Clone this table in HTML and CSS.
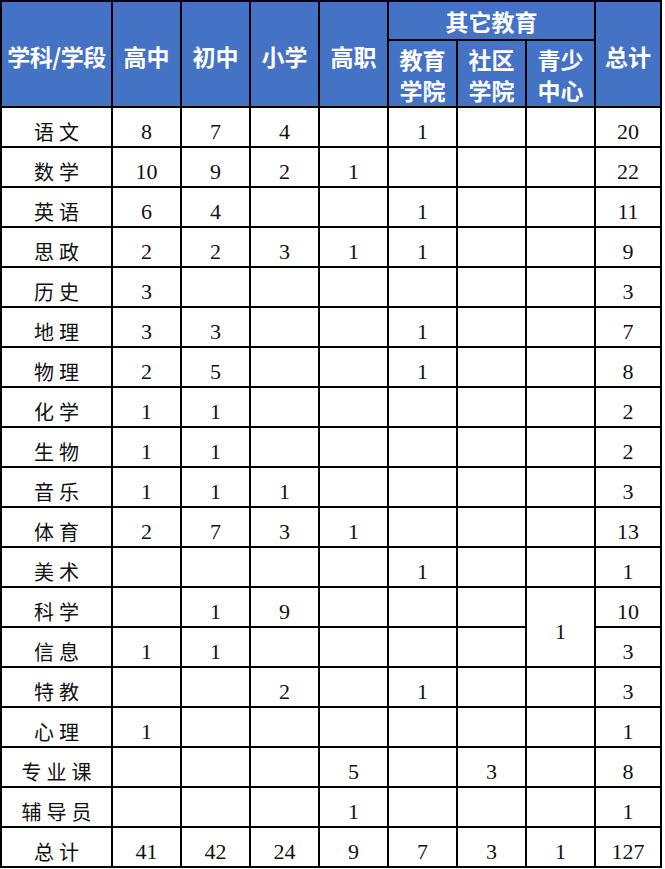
FILE: index.html
```html
<!DOCTYPE html>
<html lang="zh-CN">
<head>
<meta charset="utf-8">
<title>学科/学段统计</title>
<link rel="stylesheet" href="styles.css">
</head>
<body>
<div class="sheet">
  <div class="h tall first">学科/学段</div>
  <div class="h tall">高中</div>
  <div class="h tall">初中</div>
  <div class="h tall">小学</div>
  <div class="h tall">高职</div>
  <div class="h group">其它教育</div>
  <div class="h tall">总计</div>
  <div class="h sub">教育<br>学院</div>
  <div class="h sub">社区<br>学院</div>
  <div class="h sub">青少<br>中心</div>

  <div class="n">语文</div><div class="c">8</div><div class="c">7</div><div class="c">4</div><div class="c"></div><div class="c">1</div><div class="c"></div><div class="c"></div><div class="c">20</div>
  <div class="n">数学</div><div class="c">10</div><div class="c">9</div><div class="c">2</div><div class="c">1</div><div class="c"></div><div class="c"></div><div class="c"></div><div class="c">22</div>
  <div class="n">英语</div><div class="c">6</div><div class="c">4</div><div class="c"></div><div class="c"></div><div class="c">1</div><div class="c"></div><div class="c"></div><div class="c">11</div>
  <div class="n">思政</div><div class="c">2</div><div class="c">2</div><div class="c">3</div><div class="c">1</div><div class="c">1</div><div class="c"></div><div class="c"></div><div class="c">9</div>
  <div class="n">历史</div><div class="c">3</div><div class="c"></div><div class="c"></div><div class="c"></div><div class="c"></div><div class="c"></div><div class="c"></div><div class="c">3</div>
  <div class="n">地理</div><div class="c">3</div><div class="c">3</div><div class="c"></div><div class="c"></div><div class="c">1</div><div class="c"></div><div class="c"></div><div class="c">7</div>
  <div class="n">物理</div><div class="c">2</div><div class="c">5</div><div class="c"></div><div class="c"></div><div class="c">1</div><div class="c"></div><div class="c"></div><div class="c">8</div>
  <div class="n">化学</div><div class="c">1</div><div class="c">1</div><div class="c"></div><div class="c"></div><div class="c"></div><div class="c"></div><div class="c"></div><div class="c">2</div>
  <div class="n">生物</div><div class="c">1</div><div class="c">1</div><div class="c"></div><div class="c"></div><div class="c"></div><div class="c"></div><div class="c"></div><div class="c">2</div>
  <div class="n">音乐</div><div class="c">1</div><div class="c">1</div><div class="c">1</div><div class="c"></div><div class="c"></div><div class="c"></div><div class="c"></div><div class="c">3</div>
  <div class="n">体育</div><div class="c">2</div><div class="c">7</div><div class="c">3</div><div class="c">1</div><div class="c"></div><div class="c"></div><div class="c"></div><div class="c">13</div>
  <div class="n">美术</div><div class="c"></div><div class="c"></div><div class="c"></div><div class="c"></div><div class="c">1</div><div class="c"></div><div class="c"></div><div class="c">1</div>
  <div class="n">科学</div><div class="c"></div><div class="c">1</div><div class="c">9</div><div class="c"></div><div class="c"></div><div class="c"></div><div class="c span2">1</div><div class="c">10</div>
  <div class="n">信息</div><div class="c">1</div><div class="c">1</div><div class="c"></div><div class="c"></div><div class="c"></div><div class="c"></div><div class="c">3</div>
  <div class="n">特教</div><div class="c"></div><div class="c"></div><div class="c">2</div><div class="c"></div><div class="c">1</div><div class="c"></div><div class="c"></div><div class="c">3</div>
  <div class="n">心理</div><div class="c">1</div><div class="c"></div><div class="c"></div><div class="c"></div><div class="c"></div><div class="c"></div><div class="c"></div><div class="c">1</div>
  <div class="n">专业课</div><div class="c"></div><div class="c"></div><div class="c"></div><div class="c">5</div><div class="c"></div><div class="c">3</div><div class="c"></div><div class="c">8</div>
  <div class="n">辅导员</div><div class="c"></div><div class="c"></div><div class="c"></div><div class="c">1</div><div class="c"></div><div class="c"></div><div class="c"></div><div class="c">1</div>
  <div class="n">总计</div><div class="c">41</div><div class="c">42</div><div class="c">24</div><div class="c">9</div><div class="c">7</div><div class="c">3</div><div class="c">1</div><div class="c">127</div>
</div>
</body>
</html>
```

FILE: styles.css
```css
html, body {
  margin: 0;
  padding: 0;
  background: #ffffff;
}

.sheet {
  display: grid;
  grid-template-columns: 109px repeat(7, 67px) 64px;
  grid-template-rows: 37px 65px repeat(19, 38px);
  gap: 2px;
  padding: 2px;
  background: #000000;
  width: max-content;
}

.h {
  background: #4472c4;
  color: #ffffff;
  font-family: "Noto Sans CJK SC", "Noto Sans", sans-serif;
  font-weight: 700;
  font-size: 23px;
  display: flex;
  align-items: center;
  justify-content: center;
  text-align: center;
  line-height: 31px;
}

.tall {
  grid-row: span 2;
  padding-top: 4px;
}

.first {
  white-space: nowrap;
  letter-spacing: -0.5px;
}

.group {
  grid-column: span 3;
  padding-top: 2px;
}

.sub {
  padding-top: 3px;
}

.n,
.c {
  background: #ffffff;
  color: #111111;
  display: flex;
  align-items: center;
  justify-content: center;
  padding-top: 10px;
  box-sizing: border-box;
}

.n {
  font-family: "Noto Sans CJK SC", sans-serif;
  font-size: 20px;
  line-height: 22px;
  letter-spacing: 5px;
  padding-left: 5px;
}

.c {
  font-family: "Liberation Serif", "Noto Sans CJK SC", serif;
  font-size: 22px;
  line-height: 22px;
}

.span2 {
  grid-row: span 2;
}
```
